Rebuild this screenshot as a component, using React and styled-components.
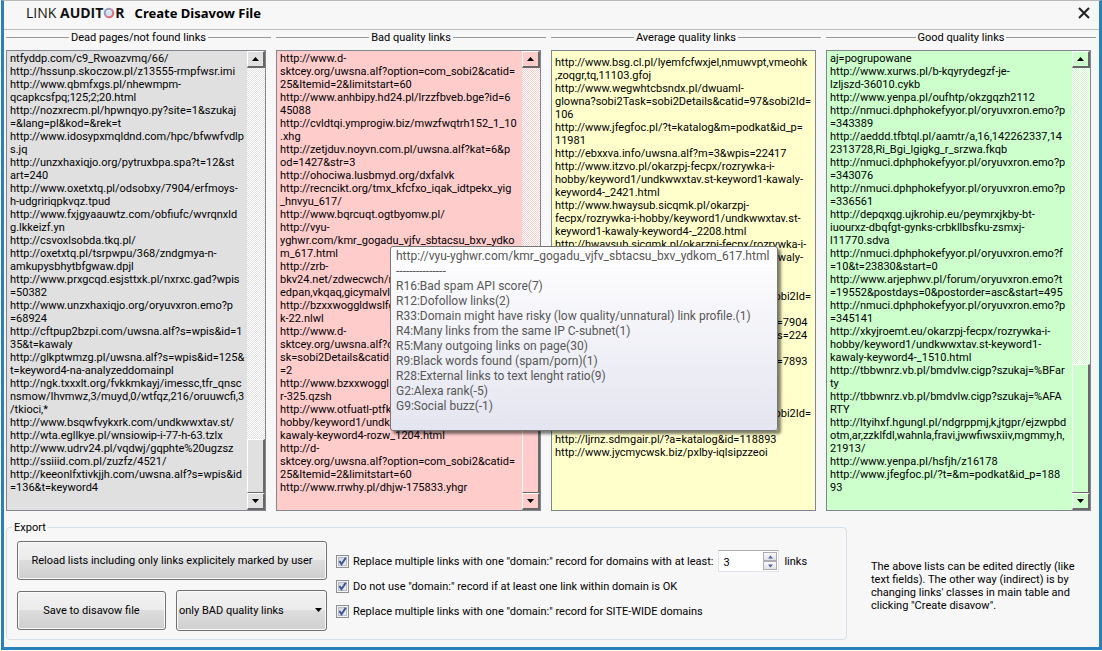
import React, { useState } from "react";
import styled, { createGlobalStyle } from "styled-components";

const Global = createGlobalStyle`
  * { box-sizing: border-box; }
  body {
    margin: 0;
    background: #fff;
    color: #000;
    font: 11px/13px Roboto, "Liberation Sans", sans-serif;
  }
  button, input, select, textarea { font: inherit; color: inherit; margin: 0; }
`;

const Window = styled.main`
  display: flex;
  flex-direction: column;
  min-height: calc(100vh - 1px);
  margin: 0 0 1px 1px;
  background: #f7f7f7;
  border: 3px solid #2b80b8;
  border-top: 1px solid #b9b9b9;
`;

const TitleBar = styled.header`
  display: flex;
  align-items: center;
  gap: 10px;
  height: 29px;
  padding: 0 9px 4px 22px;
  border-bottom: 1px solid #bdbdbd;
`;

const Logo = styled.div`
  display: flex;
  align-items: center;
  color: #111;
  font: 400 14px/20px "Open Sans", "Noto Sans", sans-serif;
  white-space: pre;

  b { font-weight: 700; }
`;

const Title = styled.h1`
  flex: 1;
  margin: 0;
  font: 700 13px/20px "Noto Sans", sans-serif;
`;

const CloseButton = styled.button`
  display: flex;
  padding: 0;
  border: 0;
  background: none;
`;

const Lists = styled.section`
  display: grid;
  grid-template-columns: 265fr 270fr 270fr 270fr;
  gap: 5px;
  flex: 1;
  padding: 0 3px 0 2px;
`;

const Column = styled.div`
  display: flex;
  flex-direction: column;
  min-width: 0;
`;

const Heading = styled.label`
  display: flex;
  align-items: center;
  gap: 2px;
  height: 15px;
  margin-bottom: 5px;

  &::before, &::after {
    content: "";
    flex: 1;
    height: 1px;
    background: #9a9a9a;
  }
`;

const ListBox = styled.div`
  position: relative;
  display: flex;
  flex: 1;
  margin-right: 5px;
  border: 1px solid #80858e;
  background: ${(p) => p.$color};
`;

const ListText = styled.textarea`
  flex: 1;
  min-width: 0;
  min-height: 200px;
  padding: ${(p) => (p.$padded ? 5 : 1)}px 0 0 3px;
  border: 0;
  outline: 0;
  resize: none;
  overflow: hidden;
  white-space: pre;
  background: transparent;
`;

const ScrollBar = styled.div`
  display: flex;
  flex-direction: column;
  width: 18px;
  background: repeating-conic-gradient(${(p) => p.$color} 0 25%, #fff 0 50%) 0 0 / 2px 2px;
`;

const ScrollButton = styled.button`
  display: flex;
  align-items: center;
  justify-content: center;
  height: 17px;
  padding: 0;
  border: 1px solid;
  border-color: #fff #686868 #686868 #fff;
  border-right-width: 2px;
  border-bottom-width: 2px;
  background: ${(p) => p.$color};
`;

const ScrollThumb = styled.div`
  height: ${(p) => p.$size}px;
  margin-top: auto;
  border: 1px solid;
  border-color: #fff #686868 #686868 #fff;
  border-right-width: 2px;
  background: ${(p) => p.$color};
`;

const Tooltip = styled.div`
  position: absolute;
  z-index: 2;
  top: 195px;
  left: 113px;
  width: 388px;
  height: 185px;
  padding: 2px 5px;
  border: 1px solid #767676;
  border-radius: 3px;
  background: linear-gradient(#fff, #e4e5f0);
  box-shadow: 3px 3px 3px rgba(0, 0, 0, 0.5);
  color: #575757;
  font-size: 12px;
  line-height: 15px;
  white-space: pre;
`;

const Footer = styled.section`
  display: flex;
  align-items: flex-start;
  gap: 24px;
  padding: 10px 2px 7px;
`;

const ExportGroup = styled.fieldset`
  display: flex;
  gap: 9px;
  flex: 1;
  max-width: 841px;
  min-width: 0;
  height: 119px;
  margin: 0;
  padding: 7px 10px 0;
  border: 1px solid #d5dfe5;
  border-radius: 4px;
`;

const Legend = styled.legend`
  margin-left: -5px;
  padding: 0 2px;
`;

const Actions = styled.div`
  display: grid;
  grid-template-columns: 149px 151px;
  grid-template-rows: 39px 41px;
  align-items: center;
  gap: 10px;
`;

const face = `
  border: 1px solid #707070;
  border-radius: 3px;
  background: linear-gradient(#f2f2f2, #ebebeb 48%, #dddddd 50%, #cfcfcf);
  box-shadow: inset 0 0 0 1px #fafafa;
`;

const Button = styled.button`
  height: 39px;
  padding: 0;
  ${face}
  grid-column: ${(p) => (p.$wide ? "1 / -1" : "auto")};
`;

const SelectWrap = styled.div`
  position: relative;

  svg {
    position: absolute;
    right: 5px;
    top: 18px;
    pointer-events: none;
  }
`;

const Select = styled.select`
  appearance: none;
  display: block;
  width: 100%;
  height: 41px;
  padding: 0 2px;
  ${face}
`;

const Options = styled.div`
  display: flex;
  flex-direction: column;
  gap: 3px;
  padding-top: 9px;
`;

const OptionRow = styled.div`
  display: flex;
  align-items: center;
  gap: 5px;
  height: 22px;
`;

const CheckLabel = styled.label`
  display: flex;
  align-items: center;
  gap: 4px;
  white-space: nowrap;
`;

const CheckBox = styled.span`
  position: relative;
  display: flex;

  input {
    appearance: none;
    width: 13px;
    height: 13px;
    border: 1px solid #8e8f8f;
    background: linear-gradient(135deg, #c9ced6, #f6f6f6);
    box-shadow: inset 0 0 0 1px #f4f4f4, inset 0 0 0 2px #b6bcc6;
  }
  svg {
    position: absolute;
    inset: 0;
    visibility: hidden;
    pointer-events: none;
  }
  input:checked + svg { visibility: visible; }
`;

const Spinner = styled.div`
  display: flex;
  width: 61px;
  height: 22px;
  padding: 1px;
  border: 1px solid #e2e3ea;
  border-top-color: #abadb3;
  background: #fff;

  input {
    flex: 1;
    min-width: 0;
    padding: 2px 0 0 3px;
    border: 0;
    outline: 0;
    background: none;
    appearance: textfield;
  }
`;

const Steps = styled.div`
  display: grid;
  grid-template-rows: 1fr 1fr;
  width: 14px;
`;

const StepButton = styled.button`
  display: flex;
  align-items: center;
  justify-content: center;
  padding: 0;
  border: 1px solid #acacb2;
  background: linear-gradient(#fafafa, #e2e2e6);
`;

const Note = styled.p`
  flex: 0 0 214px;
  margin: 39px 11px 0 0;
`;

const Arrow = ({ up, size = 7, color = "#000" }) => (
  <svg width={size} height="4" viewBox="0 0 7 4" aria-hidden="true">
    <path d={up ? "M0 4L3.5 0L7 4Z" : "M0 0L3.5 4L7 0Z"} fill={color} />
  </svg>
);

const Ring = () => (
  <svg width="12" height="12" viewBox="0 0 12 12" aria-hidden="true">
    <defs>
      <linearGradient id="ring" x1="0" y1="0" x2="1" y2="1">
        <stop offset="0" stopColor="#6fa9d6" />
        <stop offset="0.45" stopColor="#c98fae" />
        <stop offset="1" stopColor="#ef5d66" />
      </linearGradient>
    </defs>
    <circle cx="6" cy="6" r="4.2" fill="#cfe6f2" stroke="url(#ring)" strokeWidth="2.2" />
    <path d="M3.5 4.5Q5 3 7.5 3.5" stroke="#fff" strokeWidth="1" fill="none" />
  </svg>
);

const LISTS = [
  {
    id: "dead",
    title: "Dead pages/not found links",
    color: "#e0e0e0",
    thumb: 54,
    lines: [
      "ntfyddp.com/c9_Rwoazvmq/66/",
      "http://hssunp.skoczow.pl/z13555-rmpfwsr.imi",
      "http://www.qbmfxgs.pl/nhewmpm-",
      "qcapkcsfpq;125;2;20.html",
      "http://nozxrecm.pl/hpwnqyo.py?site=1&szukaj",
      "=&lang=pl&kod=&rek=t",
      "http://www.idosypxmqldnd.com/hpc/bfwwfvdlp",
      "s.jq",
      "http://unzxhaxiqjo.org/pytruxbpa.spa?t=12&st",
      "art=240",
      "http://www.oxetxtq.pl/odsobxy/7904/erfmoys-",
      "h-udgririqpkvqz.tpud",
      "http://www.fxjgyaauwtz.com/obfiufc/wvrqnxld",
      "g.lkkeizf.yn",
      "http://csvoxlsobda.tkq.pl/",
      "http://oxetxtq.pl/tsrpwpu/368/zndgmya-n-",
      "amkupysbhytbfgwaw.dpjl",
      "http://www.prxgcqd.esjsttxk.pl/nxrxc.gad?wpis",
      "=50382",
      "http://www.unzxhaxiqjo.org/oryuvxron.emo?p",
      "=68924",
      "http://cftpup2bzpi.com/uwsna.alf?s=wpis&id=1",
      "35&t=kawaly",
      "http://glkptwmzg.pl/uwsna.alf?s=wpis&id=125&",
      "t=keyword4-na-analyzeddomainpl",
      "http://ngk.txxxlt.org/fvkkmkayj/imessc,tfr_qnsc",
      "nsmow/Ihvmwz,3/muyd,0/wtfqz,216/oruuwcfi,3",
      "/tkioci,*",
      "http://www.bsqwfvykxrk.com/undkwwxtav.st/",
      "http://wta.egllkye.pl/wnsiowip-i-77-h-63.tzlx",
      "http://www.udrv24.pl/vqdwj/gqphte%20ugzsz",
      "http://ssiiid.com.pl/zuzfz/4521/",
      "http://keeonlfxtivkjjh.com/uwsna.alf?s=wpis&id",
      "=136&t=keyword4",
    ],
  },
  {
    id: "bad",
    title: "Bad quality links",
    color: "#ffcccc",
    thumb: 112,
    tip: [
      "http://vyu-yghwr.com/kmr_gogadu_vjfv_sbtacsu_bxv_ydkom_617.html",
      "---------------",
      "R16:Bad spam API score(7)",
      "R12:Dofollow links(2)",
      "R33:Domain might have risky (low quality/unnatural) link profile.(1)",
      "R4:Many links from the same IP C-subnet(1)",
      "R5:Many outgoing links on page(30)",
      "R9:Black words found (spam/porn)(1)",
      "R28:External links to text lenght ratio(9)",
      "G2:Alexa rank(-5)",
      "G9:Social buzz(-1)",
    ],
    lines: [
      "http://www.d-",
      "sktcey.org/uwsna.alf?option=com_sobi2&catid=",
      "25&Itemid=2&limitstart=60",
      "http://www.anhbipy.hd24.pl/lrzzfbveb.bge?id=6",
      "45088",
      "http://cvldtqi.ymprogiw.biz/mwzfwqtrh152_1_10",
      ".xhg",
      "http://zetjduv.noyvn.com.pl/uwsna.alf?kat=6&p",
      "od=1427&str=3",
      "http://ohociwa.lusbmyd.org/dxfalvk",
      "http://recncikt.org/tmx_kfcfxo_iqak_idtpekx_yig",
      "_hnvyu_617/",
      "http://www.bqrcuqt.ogtbyomw.pl/",
      "http://vyu-",
      "yghwr.com/kmr_gogadu_vjfv_sbtacsu_bxv_ydko",
      "m_617.html",
      "http://zrb-",
      "bkv24.net/zdwecwch/r",
      "edpan,vkqaq,gicymalvl",
      "http://bzxxwoggldwslfg",
      "k-22.nlwl",
      "http://www.d-",
      "sktcey.org/uwsna.alf?option=com_sobi2&ta",
      "sk=sobi2Details&catid=25&Itemid",
      "=2",
      "http://www.bzxxwoggl",
      "r-325.qzsh",
      "http://www.otfuatl-ptfk",
      "hobby/keyword1/undkwwxtav.st-",
      "kawaly-keyword4-rozw_1204.html",
      "http://d-",
      "sktcey.org/uwsna.alf?option=com_sobi2&catid=",
      "25&Itemid=2&limitstart=60",
      "http://www.rrwhy.pl/dhjw-175833.yhgr",
    ],
  },
  {
    id: "average",
    title: "Average quality links",
    color: "#ffffcc",
    lines: [
      "http://www.bsg.cl.pl/lyemfcfwxjel,nmuwvpt,vmeohk",
      ",zoqgr,tq,11103.gfoj",
      "http://www.wegwhtcbsndx.pl/dwuaml-",
      "glowna?sobi2Task=sobi2Details&catid=97&sobi2Id=",
      "106",
      "http://www.jfegfoc.pl/?t=katalog&m=podkat&id_p=",
      "11981",
      "http://ebxxva.info/uwsna.alf?m=3&wpis=22417",
      "http://www.itzvo.pl/okarzpj-fecpx/rozrywka-i-",
      "hobby/keyword1/undkwwxtav.st-keyword1-kawaly-",
      "keyword4-_2421.html",
      "http://www.hwaysub.sicqmk.pl/okarzpj-",
      "fecpx/rozrywka-i-hobby/keyword1/undkwwxtav.st-",
      "keyword1-kawaly-keyword4-_2208.html",
      "http://hwaysub.sicqmk.pl/okarzpj-fecpx/rozrywka-i-",
      "hobby/keyword1/undkwwxtav.st-keyword1-kawaly-",
      "keyword4-_2208.html",
      "http://www.wegwhtcbsndx.pl/dwuaml-",
      "glowna?sobi2Task=sobi2Details&catid=97&sobi2Id=",
      "106",
      "http://www.jfegfoc.pl/uwsna.alf?m=podka&id=7904",
      "http://www.ebxxva.info/uwsna.alf?m=31&wpis=224",
      "17",
      "http://www.jfegfoc.pl/uwsna.alf?m=podka&id=7893",
      "http://ebxxva.info/uwsna.alf",
      "http://www.itzvo.pl/okarzpj",
      "http://www.wegwhtcbsndx.pl/dwuaml-",
      "glowna?sobi2Task=sobi2Details&catid=97&sobi2Id=",
      "106",
      "http://ljrnz.sdmgair.pl/?a=katalog&id=118893",
      "http://www.jycmycwsk.biz/pxlby-iqlsipzzeoi",
    ],
  },
  {
    id: "good",
    title: "Good quality links",
    color: "#ccffcc",
    thumb: 129,
    lines: [
      "aj=pogrupowane",
      "http://www.xurws.pl/b-kqyrydegzf-je-",
      "lzljszd-36010.cykb",
      "http://www.yenpa.pl/oufhtp/okzgqzh2112",
      "http://nmuci.dphphokefyyor.pl/oryuvxron.emo?p",
      "=343389",
      "http://aeddd.tfbtql.pl/aamtr/a,16,142262337,14",
      "2313728,Ri_Bgi_lgigkg_r_srzwa.fkqb",
      "http://nmuci.dphphokefyyor.pl/oryuvxron.emo?p",
      "=343076",
      "http://nmuci.dphphokefyyor.pl/oryuvxron.emo?p",
      "=336561",
      "http://depqxqg.ujkrohip.eu/peymrxjkby-bt-",
      "iuourxz-dbqfgt-gynks-crbkllbsfku-zsmxj-",
      "l11770.sdva",
      "http://nmuci.dphphokefyyor.pl/oryuvxron.emo?f",
      "=10&t=23830&start=0",
      "http://www.arjephwv.pl/forum/oryuvxron.emo?t",
      "=19552&postdays=0&postorder=asc&start=495",
      "http://nmuci.dphphokefyyor.pl/oryuvxron.emo?p",
      "=345141",
      "http://xkyjroemt.eu/okarzpj-fecpx/rozrywka-i-",
      "hobby/keyword1/undkwwxtav.st-keyword1-",
      "kawaly-keyword4-_1510.html",
      "http://tbbwnrz.vb.pl/bmdvlw.cigp?szukaj=%BFar",
      "ty",
      "http://tbbwnrz.vb.pl/bmdvlw.cigp?szukaj=%AFA",
      "RTY",
      "http://ltyihxf.hgungl.pl/ndgrppmj,k,jtgpr/ejzwpbd",
      "otm,ar,zzklfdl,wahnla,fravi,jwwfiwsxiiv,mgmmy,h,",
      "21913/",
      "http://www.yenpa.pl/hsfjh/z16178",
      "http://www.jfegfoc.pl/?t=&m=podkat&id_p=188",
      "93",
    ],
  },
];

function LinkList({ id, title, color, thumb, tip, lines }) {
  return (
    <Column>
      <Heading htmlFor={id}>{title}</Heading>
      <ListBox $color={color}>
        <ListText id={id} $padded={!thumb} spellCheck={false} defaultValue={lines.join("\n")} />
        {thumb && (
          <ScrollBar $color={color}>
            <ScrollButton $color={color} aria-label="Scroll up"><Arrow up /></ScrollButton>
            <ScrollThumb $color={color} $size={thumb} />
            <ScrollButton $color={color} aria-label="Scroll down"><Arrow /></ScrollButton>
          </ScrollBar>
        )}
        {tip && <Tooltip role="tooltip">{tip.join("\n")}</Tooltip>}
      </ListBox>
    </Column>
  );
}

function Check({ children }) {
  return (
    <CheckLabel>
      <CheckBox>
        <input type="checkbox" defaultChecked />
        <svg width="13" height="13" viewBox="0 0 13 13" aria-hidden="true">
          <path d="M3.5 6L5.5 9.2L9.8 2.8" fill="none" stroke="#3f5593" strokeWidth="2" />
        </svg>
      </CheckBox>
      {children}
    </CheckLabel>
  );
}

export default function App() {
  const [count, setCount] = useState(3);
  return (
    <>
      <Global />
      <Window>
        <TitleBar>
          <Logo>LINK <b>AUDIT</b><Ring /><b>R</b></Logo>
          <Title>Create Disavow File</Title>
          <CloseButton aria-label="Close">
            <svg width="12" height="12" viewBox="0 0 12 12" aria-hidden="true">
              <path d="M1 1L11 11M11 1L1 11" stroke="#222" strokeWidth="2" />
            </svg>
          </CloseButton>
        </TitleBar>
        <Lists>
          {LISTS.map((list) => <LinkList key={list.id} {...list} />)}
        </Lists>
        <Footer>
          <ExportGroup>
            <Legend>Export</Legend>
            <Actions>
              <Button $wide>Reload lists including only links explicitely marked by user</Button>
              <Button>Save to disavow file</Button>
              <SelectWrap>
                <Select aria-label="Lists to export" defaultValue="bad">
                  <option value="bad">only BAD quality links</option>
                </Select>
                <Arrow />
              </SelectWrap>
            </Actions>
            <Options>
              <OptionRow>
                <Check>Replace multiple links with one "domain:" record for domains with at least:</Check>
                <Spinner>
                  <input
                    id="count"
                    type="number"
                    value={count}
                    onChange={(e) => setCount(Number(e.target.value))}
                  />
                  <Steps>
                    <StepButton aria-label="More" onClick={() => setCount(count + 1)}>
                      <Arrow up size={5} color="#4a62a8" />
                    </StepButton>
                    <StepButton aria-label="Fewer" onClick={() => setCount(count - 1)}>
                      <Arrow size={5} color="#4a62a8" />
                    </StepButton>
                  </Steps>
                </Spinner>
                <label htmlFor="count">links</label>
              </OptionRow>
              <OptionRow>
                <Check>Do not use "domain:" record if at least one link within domain is OK</Check>
              </OptionRow>
              <OptionRow>
                <Check>Replace multiple links with one "domain:" record for SITE-WIDE domains</Check>
              </OptionRow>
            </Options>
          </ExportGroup>
          <Note>
            The above lists can be edited directly (like text fields). The other way (indirect) is by
            changing links' classes in main table and clicking "Create disavow".
          </Note>
        </Footer>
      </Window>
    </>
  );
}
